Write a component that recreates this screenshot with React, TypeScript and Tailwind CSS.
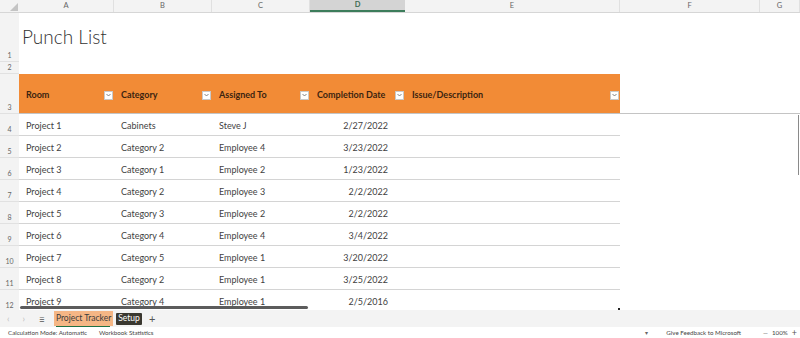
import React from "react";

const COLS = [
  { k: "A", w: 95 },
  { k: "B", w: 98 },
  { k: "C", w: 98 },
  { k: "D", w: 95 },
  { k: "E", w: 215 },
  { k: "F", w: 140 },
  { k: "G", w: 40 },
];

const DATA = [
  ["Project 1", "Cabinets", "Steve J", "2/27/2022"],
  ["Project 2", "Category 2", "Employee 4", "3/23/2022"],
  ["Project 3", "Category 1", "Employee 2", "1/23/2022"],
  ["Project 4", "Category 2", "Employee 3", "2/2/2022"],
  ["Project 5", "Category 3", "Employee 2", "2/2/2022"],
  ["Project 6", "Category 4", "Employee 4", "3/4/2022"],
  ["Project 7", "Category 5", "Employee 1", "3/20/2022"],
  ["Project 8", "Category 2", "Employee 1", "3/25/2022"],
  ["Project 9", "Category 4", "Employee 1", "2/5/2016"],
];

const HEAD = ["Room", "Category", "Assigned To", "Completion Date", "Issue/Description"];

function FilterBtn() {
  return (
    <div className="w-[9px] h-[9px] bg-white border border-[#c9c9c9] flex items-center justify-center shrink-0">
      <svg width="5" height="4" viewBox="0 0 5 4">
        <path d="M0.5 1 L2.5 3 L4.5 1" fill="none" stroke="#666" strokeWidth="0.8" />
      </svg>
    </div>
  );
}

function RowHdr({ n, h }: { n: string; h: number }) {
  return (
    <div
      className="w-[19px] shrink-0 bg-[#f3f3f3] border-b border-[#e1e1e1] flex items-end justify-center pb-[1px] text-[7px] text-[#666]"
      style={{ height: h }}
    >
      {n}
    </div>
  );
}

export default function App() {
  const font = { fontFamily: 'Lato, "Noto Sans", sans-serif' };
  return (
    <div className="w-[800px] h-[338px] overflow-hidden bg-white flex flex-col" style={font}>
      {/* grid */}
      <div className="relative h-[310px] overflow-hidden flex flex-col">
        {/* column header */}
        <div className="flex h-[13px] shrink-0 bg-[#f3f3f3] border-b border-[#d6d6d6]">
          <div className="w-[19px] shrink-0 relative">
            <svg className="absolute right-[1px] bottom-[1px]" width="8" height="8" viewBox="0 0 8 8">
              <path d="M8 0 L8 8 L0 8 Z" fill="#c4c4c4" />
            </svg>
          </div>
          {COLS.map((c) =>
            c.k === "D" ? (
              <div
                key={c.k}
                className="shrink-0 bg-[#d4d4d4] border-b-2 border-[#3d7d5b] flex items-center justify-center text-[7.5px] text-[#3d6b52] font-bold"
                style={{ width: c.w }}
              >
                {c.k}
              </div>
            ) : (
              <div
                key={c.k}
                className="shrink-0 border-r border-[#e0e0e0] flex items-center justify-center text-[7.5px] text-[#666]"
                style={{ width: c.w }}
              >
                {c.k}
              </div>
            )
          )}
        </div>

        {/* row 1: title */}
        <div className="flex h-[49px] shrink-0">
          <RowHdr n="1" h={49} />
          <div className="flex items-center pl-[3px] whitespace-nowrap text-[19px] text-[#333] font-light">
            Punch List
          </div>
        </div>

        {/* row 2 */}
        <div className="flex h-[12px] shrink-0">
          <RowHdr n="2" h={12} />
        </div>

        {/* row 3: header */}
        <div className="flex h-[40px] shrink-0 border-b border-[#c4c4c4]">
          <RowHdr n="3" h={40} />
          {HEAD.map((t, i) => (
            <div
              key={t}
              className="shrink-0 bg-[#f28b36] flex items-center justify-between pl-[7px] pr-[1px] pt-[3px] text-[9px] font-bold text-[#3b2410]"
              style={{ width: COLS[i].w }}
            >
              <span className="whitespace-nowrap">{t}</span>
              <FilterBtn />
            </div>
          ))}
        </div>

        {/* data rows */}
        {DATA.map((r, ri) => (
          <div key={ri} className="flex h-[22px] shrink-0">
            <RowHdr n={String(ri + 4)} h={22} />
            <div className="flex border-b border-[#d4d4d4] text-[9px] text-[#3f3f3f]">
              {r.map((v, ci) => (
                <div
                  key={ci}
                  className={
                    "shrink-0 flex items-center pt-[2px] whitespace-nowrap " +
                    (ci === 3 ? "justify-end pr-[17px]" : "pl-[7px]")
                  }
                  style={{ width: COLS[ci].w }}
                >
                  {v}
                </div>
              ))}
              <div className="shrink-0" style={{ width: COLS[4].w }} />
            </div>
          </div>
        ))}

        {/* vertical scroll thumb */}
        <div className="absolute right-[1px] top-[115px] w-[1.5px] h-[60px] bg-[#8a8a8a]" />
        {/* horizontal scroll bar */}
        <div className="absolute left-[20px] bottom-[1px] w-[288px] h-[3px] rounded-full bg-[#5c5c5c]" />
        {/* resize dot */}
        <div className="absolute left-[618px] bottom-[0px] w-[2px] h-[2px] bg-[#222]" />
      </div>

      {/* tab bar */}
      <div className="h-[17px] shrink-0 bg-[#f3f3f3] flex items-center text-[#333]">
        <span className="ml-[7px] text-[9px] text-[#bdbdbd]">‹</span>
        <span className="ml-[13px] text-[9px] text-[#bdbdbd]">›</span>
        <span className="ml-[14px] text-[10px] text-[#555] leading-none">≡</span>
        <div className="ml-[9px] relative h-[15px] px-[2px] bg-[#f5b685] flex items-center text-[8.5px] text-[#3b3b3b]">
          Project Tracker
          <div className="absolute left-[2px] right-[3px] bottom-[-1px] h-[1.5px] bg-[#1e7145]" />
        </div>
        <div className="ml-[3px] h-[12px] px-[2px] bg-[#3a3830] rounded-[1px] flex items-center text-[8.5px] text-white">
          Setup
        </div>
        <span className="ml-[7px] text-[11px] text-[#555] leading-none">+</span>
      </div>

      {/* status bar */}
      <div className="flex-1 flex items-center text-[6.2px] text-[#444]">
        <span className="ml-[8px]">Calculation Mode: Automatic</span>
        <span className="ml-[12px]">Workbook Statistics</span>
        <span className="ml-auto text-[6px] text-[#666]">▾</span>
        <span className="ml-[18px]">Give Feedback to Microsoft</span>
        <span className="ml-[22px] text-[#555]">—</span>
        <span className="ml-[4px]">100%</span>
        <span className="ml-[4px] mr-[3px] text-[9px] leading-none text-[#555]">+</span>
      </div>
    </div>
  );
}
